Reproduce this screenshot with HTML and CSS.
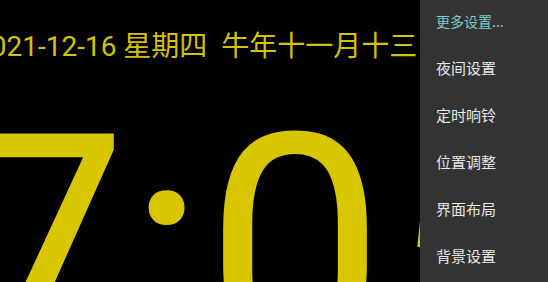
FILE: index.html
```html
<!DOCTYPE html>
<html lang="zh">
<head>
<meta charset="utf-8">
<link rel="stylesheet" href="styles.css">
</head>
<body>
<div class="screen">
  <div class="date">2021-12-16 星期四  牛年十一月十三</div>
  <div class="clock">17:05</div>
  <ul class="menu">
    <li class="item accent">更多设置...</li>
    <li class="item">夜间设置</li>
    <li class="item">定时响铃</li>
    <li class="item">位置调整</li>
    <li class="item">界面布局</li>
    <li class="item">背景设置</li>
  </ul>
</div>
</body>
</html>
```
FILE: styles.css
```css
html, body {
  margin: 0;
  padding: 0;
  background: #000;
  width: 548px;
  height: 282px;
  overflow: hidden;
}
.screen {
  position: relative;
  width: 548px;
  height: 282px;
  overflow: hidden;
}
.date {
  font-family: Roboto, "Noto Sans CJK SC", sans-serif;
  font-size: 28px;
  line-height: 32px;
  color: #d4c300;
  white-space: pre;
  margin-left: -25px;
  padding-top: 31px;
}
.clock {
  font-family: Roboto, sans-serif;
  font-size: 320px;
  line-height: 320px;
  color: #d7c600;
  white-space: pre;
  margin-left: -232px;
  margin-top: 29px;
}
.menu {
  position: absolute;
  top: -3px;
  left: 420px;
  width: 128px;
  height: 300px;
  margin: 0;
  padding: 0;
  list-style: none;
  background: #333333;
}
.item {
  height: 47px;
  display: flex;
  align-items: center;
  padding-left: 16px;
  font-family: "Noto Sans CJK SC", sans-serif;
  font-size: 15px;
  color: #e6e6e6;
}
.item.accent {
  font-size: 14px;
  color: #80cbc4;
}
```
